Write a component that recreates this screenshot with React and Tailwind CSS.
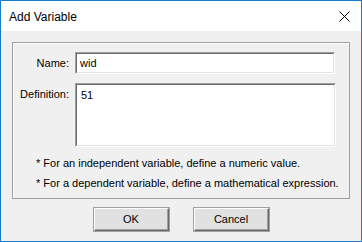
import React from 'react'

const font = { fontFamily: '"Liberation Sans", Arial, sans-serif' }

const Sunken = ({ className, children }) => (
  <div className={`border border-t-[#a0a0a0] border-l-[#a0a0a0] border-r-white border-b-white ${className}`}>
    <div className="w-full h-full border border-t-[#696969] border-l-[#696969] border-r-[#e3e3e3] border-b-[#e3e3e3] bg-white pl-[3px] text-[11px] text-black">
      {children}
    </div>
  </div>
)

const Btn = ({ children }) => (
  <button className="w-[75px] h-[23px] border border-t-white border-l-white border-r-[#696969] border-b-[#696969] shadow-[inset_-1px_-1px_0_#a0a0a0] outline outline-1 outline-[#a0a0a0] bg-[#e1e1e1] text-[11px] text-black flex items-center justify-center">
    {children}
  </button>
)

export default function App() {
  return (
    <div style={font} className="w-[362px] h-[242px] border border-[#1a7bcb] bg-[#f0f0f0] flex flex-col text-black">
      <div className="h-[30px] bg-white flex items-center justify-between pl-[8px] pr-[10px]">
        <span className="text-[12px] pt-[1px]">Add Variable</span>
        <svg width="11" height="11" viewBox="0 0 11 11" className="mr-[1px]">
          <path d="M0.5 0.5L10.5 10.5M10.5 0.5L0.5 10.5" stroke="#000" strokeWidth="1" />
        </svg>
      </div>
      <div className="flex-1 pl-[11px] pt-[11px]">
        <div className="w-[338px] h-[157px] border border-[#a0a0a0] shadow-[inset_1px_1px_0_#fff] pt-[9px] text-[11px]">
          <div className="flex items-center">
            <div className="w-[56px] text-right">Name:</div>
            <Sunken className="ml-[6px] w-[260px] h-[22px]">
              <div className="h-full flex items-center">wid</div>
            </Sunken>
          </div>
          <div className="flex items-start mt-[9px]">
            <div className="w-[56px] text-right pt-[3px]">Definition:</div>
            <Sunken className="ml-[6px] w-[261px] h-[64px]">
              <div className="pt-[2px] pl-[1px]">51</div>
            </Sunken>
          </div>
          <div className="pl-[23px] mt-[10px] flex flex-col gap-[7px] leading-[13px]">
            <div>* For an independent variable, define a numeric value.</div>
            <div>* For a dependent variable, define a mathematical expression.</div>
          </div>
        </div>
        <div className="flex justify-center gap-[25px] mt-[9px] pr-[11px]">
          <Btn>OK</Btn>
          <Btn>Cancel</Btn>
        </div>
      </div>
    </div>
  )
}
